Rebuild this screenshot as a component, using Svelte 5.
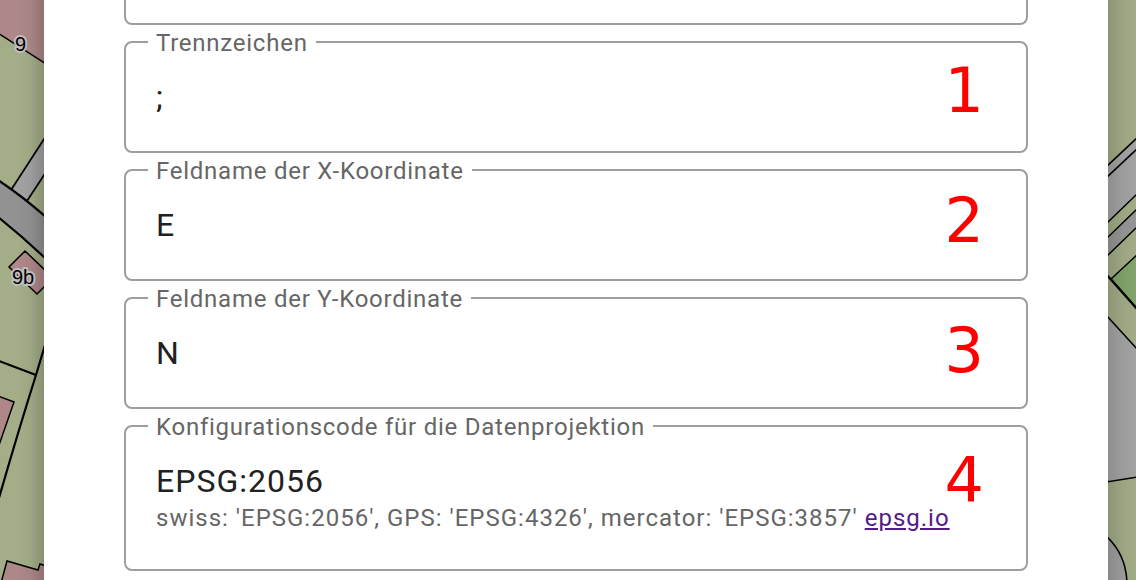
<script>
  let fields = $state([
    { id: 'separator', label: 'Trennzeichen', value: ';' },
    { id: 'x-field', label: 'Feldname der X-Koordinate', value: 'E' },
    { id: 'y-field', label: 'Feldname der Y-Koordinate', value: 'N' },
    { id: 'projection', label: 'Konfigurationscode für die Datenprojektion', value: 'EPSG:2056', hint: true }
  ]);
</script>

<div class="page">
  <svg class="map" width="44" height="580" viewBox="0 0 44 580" aria-hidden="true">
    <defs>
      <linearGradient id="shade-left">
        <stop offset="0.4" stop-color="#000" stop-opacity="0" />
        <stop offset="0.7" stop-color="#000" stop-opacity="0.04" />
        <stop offset="1" stop-color="#000" stop-opacity="0.17" />
      </linearGradient>
    </defs>
    <rect width="44" height="580" fill="#a3ad87" />
    <g stroke="#000" stroke-width="1.5">
      <path d="M-2-2H46V64L-2 33Z" fill="#ae8888" />
      <path d="M46 136L11 190L27 201L46 172" fill="#a2a2a2" stroke-width="1.8" />
      <path d="M-2 180Q22 196 46 217V259Q22 236-2 217Z" fill="#929292" stroke-width="2.2" />
      <path d="M25 251L9 267L37 294L46 285V271Z" fill="#ae8888" />
      <path d="M-2 396L14 402L-2 448Z" fill="#ae8888" />
      <path d="M1 583L7 561L38 570L40 564L46 566V583Z" fill="#ae8888" />
      <path d="M-1 361L36 375M45 345L36 375Q18 432-1 498" fill="none" stroke-width="2.2" />
    </g>
    <rect width="44" height="580" fill="url(#shade-left)" />
    <g class="house">
      <text x="15" y="51">9</text>
      <text x="12" y="284">9b</text>
    </g>
  </svg>

  <main class="dialog">
    <form class="fields">
      <div class="previous"></div>
      {#each fields as field (field.id)}
        <fieldset>
          <legend><label for={field.id}>{field.label}</label></legend>
          <input id={field.id} type="text" bind:value={field.value} />
          {#if field.hint}
            <p>swiss: 'EPSG:2056', GPS: 'EPSG:4326', mercator: 'EPSG:3857' <a href="https://epsg.io">epsg.io</a></p>
          {/if}
        </fieldset>
      {/each}
      <div class="markers">
        {#each fields as field, i (field.id)}
          <span>{i + 1}</span>
        {/each}
      </div>
    </form>
  </main>

  <svg class="map" width="28" height="580" viewBox="0 0 28 580" aria-hidden="true">
    <defs>
      <linearGradient id="shade-right">
        <stop offset="0" stop-color="#000" stop-opacity="0.14" />
        <stop offset="0.5" stop-color="#000" stop-opacity="0.05" />
        <stop offset="1" stop-color="#000" stop-opacity="0.01" />
      </linearGradient>
    </defs>
    <rect width="28" height="580" fill="#a3ad87" />
    <g stroke="#000" stroke-width="1.5">
      <path d="M-2 167L30 137V193L-2 224Z" fill="#a4a4a4" />
      <path d="M-2 178L30 148" fill="none" />
      <path d="M-2 239L30 208V226L-2 257Z" fill="#979797" />
      <path d="M3 279L30 254V310Z" fill="#83a56a" />
      <path d="M-2 274L30 310" fill="none" stroke-width="2.2" />
      <path d="M-2 315L30 350V477L-2 482Z" fill="#a4a4a4" />
      <path d="M-2 536Q18 554 19 583H-2Z" fill="#a0a0a0" />
    </g>
    <rect width="28" height="580" fill="url(#shade-right)" />
  </svg>
</div>

<style>
  :global(body) {
    margin: 0;
    background: #a3ad87;
  }

  .page {
    display: flex;
    min-height: 100vh;
    overflow: hidden;
    font-family: Roboto, sans-serif;
  }

  .map {
    flex: none;
    display: block;
  }

  .house {
    font: 20px "Liberation Sans", Arial, sans-serif;
    fill: #000;
    stroke: #bdbdbd;
    stroke-width: 4px;
    stroke-linejoin: round;
    paint-order: stroke;
  }

  .dialog {
    flex: 1;
    min-width: 0;
    padding: 0 80px;
    background: #fff;
  }

  .fields {
    position: relative;
    display: flex;
    flex-direction: column;
    gap: 3px;
  }

  .previous {
    height: 23px;
    border: 2px solid #9e9e9e;
    border-top: 0;
    border-radius: 0 0 8px 8px;
  }

  fieldset {
    min-width: 0;
    margin: 0;
    padding: 21px 30px 34px 22px;
    border: 2px solid #9e9e9e;
    border-radius: 8px;
  }

  legend {
    padding: 2px 8px 0;
    color: #666;
    font-size: 24px;
    line-height: 26px;
    letter-spacing: 0.03125em;
  }

  label {
    display: block;
  }

  input {
    display: block;
    box-sizing: border-box;
    width: 100%;
    height: 40px;
    padding: 0 8px;
    border: 0;
    outline: 0;
    background: none;
    color: #212121;
    font: 32px/40px Roboto, sans-serif;
    letter-spacing: 0.03125em;
  }

  p {
    margin: 0;
    padding: 0 8px;
    color: #666;
    font-size: 24px;
    line-height: 34px;
    letter-spacing: 1px;
  }

  a {
    color: #551a8b;
  }

  .markers {
    position: absolute;
    top: 26px;
    right: 44px;
    display: flex;
    flex-direction: column;
    color: #f00;
    font: 62px/130px "DejaVu Sans", sans-serif;
    pointer-events: none;
  }
</style>
